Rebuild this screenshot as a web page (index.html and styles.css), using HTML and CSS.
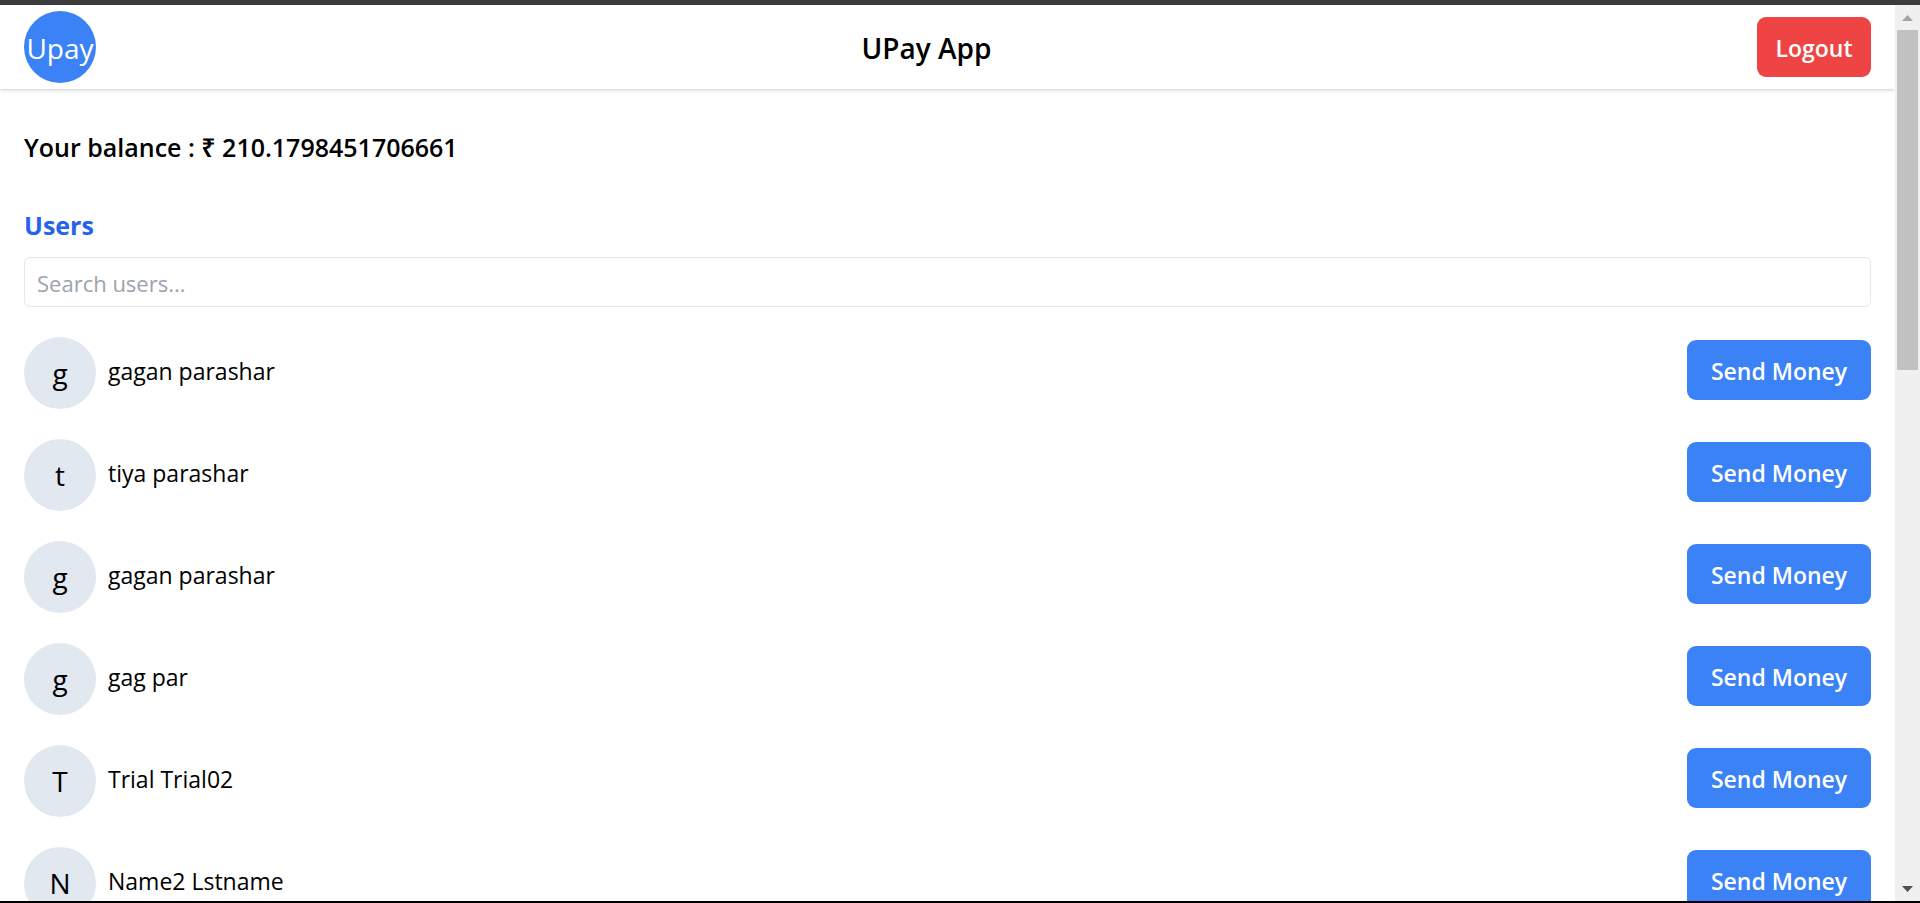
FILE: index.html
```html
<!DOCTYPE html>
<html lang="en">
<head>
  <meta charset="utf-8">
  <meta name="viewport" content="width=device-width, initial-scale=1">
  <title>UPay App</title>
  <link rel="stylesheet" href="styles.css">
</head>
<body>
  <div class="window">
    <div class="viewport">
      <div class="page">
        <header class="topbar">
          <div class="avatar avatar-brand">Upay</div>
          <h1 class="title">UPay App</h1>
          <button class="button button-logout" type="button">Logout</button>
        </header>
        <main class="content">
          <p class="balance">Your balance : ₹ 210.1798451706661</p>
          <h2 class="heading"><label for="search">Users</label></h2>
          <input class="search" id="search" type="text" placeholder="Search users...">
          <ul class="users">
            <li class="user"><span class="avatar">g</span><span class="name">gagan parashar</span><button class="button button-send" type="button">Send Money</button></li>
            <li class="user"><span class="avatar">t</span><span class="name">tiya parashar</span><button class="button button-send" type="button">Send Money</button></li>
            <li class="user"><span class="avatar">g</span><span class="name">gagan parashar</span><button class="button button-send" type="button">Send Money</button></li>
            <li class="user"><span class="avatar">g</span><span class="name">gag par</span><button class="button button-send" type="button">Send Money</button></li>
            <li class="user"><span class="avatar">T</span><span class="name">Trial Trial02</span><button class="button button-send" type="button">Send Money</button></li>
            <li class="user"><span class="avatar">N</span><span class="name">Name2 Lstname</span><button class="button button-send" type="button">Send Money</button></li>
          </ul>
        </main>
      </div>
      <div class="scrollbar" aria-hidden="true">
        <svg class="arrow arrow-up" viewBox="0 0 11 6"><path d="M0 6 5.500 0 11 6z"/></svg>
        <div class="track"><div class="thumb"></div></div>
        <svg class="arrow" viewBox="0 0 11 6"><path d="M0 0 5.500 6 11 0z"/></svg>
      </div>
    </div>
  </div>
</body>
</html>
```
FILE: styles.css
```css
* {
  box-sizing: border-box;
  margin: 0;
  padding: 0;
}

body {
  background: #fff;
  color: #000;
  font-family: "Open Sans", "Noto Sans", sans-serif;
  font-size: 23px;
  line-height: 36px;
}

.window {
  display: flex;
  height: 100vh;
  border-top: 5px solid #3c3c3c;
  border-bottom: 2px solid #000;
}

.viewport {
  display: flex;
  flex: 1;
  min-width: 0;
}

.page {
  flex: 1;
  min-width: 0;
  overflow: hidden;
}

.topbar {
  display: flex;
  align-items: center;
  justify-content: space-between;
  padding: 6px 24px;
  box-shadow: 0 1px 5px rgba(0, 0, 0, 0.1), 0 1px 3px rgba(0, 0, 0, 0.1);
}

.title {
  padding-top: 2px;
  font-size: 28px;
  font-weight: 600;
}

.avatar {
  display: flex;
  flex: none;
  align-items: center;
  justify-content: center;
  width: 72px;
  height: 72px;
  border-radius: 50%;
  background: #e2e8f0;
  font-size: 28px;
}

.avatar-brand {
  padding-top: 2px;
  background: #3b82f6;
  color: #fff;
}

.button {
  height: 60px;
  padding-top: 2px;
  border: 0;
  border-radius: 9px;
  color: #fff;
  font: inherit;
  font-weight: 600;
  cursor: pointer;
}

.button-logout {
  width: 114px;
  background: #ef4444;
}

.button-send {
  width: 184px;
  margin: 0 0 6px auto;
  background: #3b82f6;
}

.content {
  padding: 40px 24px;
}

.balance {
  font-size: 25px;
  font-weight: 600;
}

.heading {
  margin: 42px 0 14px;
  color: #2563eb;
  font-size: 25px;
  font-weight: 700;
}

.search {
  display: block;
  width: 100%;
  height: 50px;
  padding: 2px 12px 0;
  border: 1px solid #e2e8f0;
  border-radius: 6px;
  background: #fff;
  font: inherit;
  font-size: 22px;
}

.search::placeholder {
  color: #9ca3af;
}

.users {
  display: grid;
  gap: 30px;
  margin-top: 30px;
  list-style: none;
}

.user {
  display: flex;
  align-items: center;
  gap: 12px;
}

.name {
  padding-bottom: 4px;
}

.scrollbar {
  display: flex;
  flex: none;
  flex-direction: column;
  align-items: center;
  gap: 6px;
  width: 25px;
  padding: 10px 2px 9px;
  background: #f0f0f0;
}

.arrow {
  width: 11px;
  height: 6px;
  fill: #505050;
}

.arrow-up {
  fill: #a3a3a3;
}

.track {
  flex: 1;
  align-self: stretch;
  padding-top: 3px;
}

.thumb {
  height: 40%;
  background: #c1c1c1;
}
```
